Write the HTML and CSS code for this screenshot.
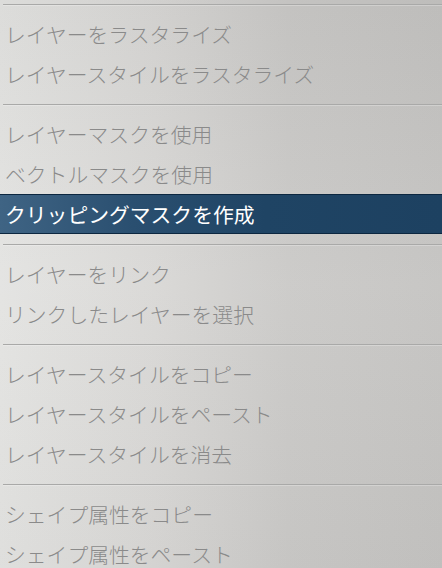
FILE: index.html
```html
<!DOCTYPE html>
<html lang="ja">
<head>
<meta charset="utf-8">
<link rel="stylesheet" href="styles.css">
</head>
<body>
<ul class="menu">
  <li class="sep"></li>
  <li class="item">レイヤーをラスタライズ</li>
  <li class="item">レイヤースタイルをラスタライズ</li>
  <li class="sep"></li>
  <li class="item">レイヤーマスクを使用</li>
  <li class="item">ベクトルマスクを使用</li>
  <li class="item active">クリッピングマスクを作成</li>
  <li class="sep"></li>
  <li class="item">レイヤーをリンク</li>
  <li class="item">リンクしたレイヤーを選択</li>
  <li class="sep"></li>
  <li class="item">レイヤースタイルをコピー</li>
  <li class="item">レイヤースタイルをペースト</li>
  <li class="item">レイヤースタイルを消去</li>
  <li class="sep"></li>
  <li class="item">シェイプ属性をコピー</li>
  <li class="item">シェイプ属性をペースト</li>
</ul>
</body>
</html>
```
FILE: styles.css
```css
html, body {
  margin: 0;
  padding: 0;
  width: 442px;
  height: 568px;
  overflow: hidden;
}
body {
  background:
    linear-gradient(to bottom, rgba(0,0,0,0.03) 0%, rgba(255,255,255,0.05) 50%, rgba(0,0,0,0.02) 100%),
    linear-gradient(to right, #e3e3e1 0%, #d8d7d5 35%, #cac9c7 65%, #c4c3c1 100%);
  font-family: "Noto Sans CJK JP", "Noto Sans", sans-serif;
}
.menu {
  list-style: none;
  margin: -6px 0 0 0;
  padding: 0;
}
.sep {
  height: 20px;
  display: flex;
  align-items: center;
  padding-left: 3px;
}
.sep::before {
  content: "";
  display: block;
  flex: 1;
  height: 1px;
  background: #a9a9a8;
  box-shadow: 0 1px 0 rgba(255,255,255,0.25);
}
.item {
  height: 40px;
  display: flex;
  align-items: center;
  padding-left: 5px;
  font-size: 20.8px;
  font-weight: 300;
  color: #8a8a8a;
  white-space: nowrap;
}
.item.active {
  color: #ffffff;
  font-weight: 400;
  background: linear-gradient(to right, #3f6484 0%, #2a4f70 30%, #1f4464 60%, #1d4161 100%);
  border-top: 1px solid #0c2740;
  border-bottom: 1px solid #0c2740;
  height: 38px;
}
```
